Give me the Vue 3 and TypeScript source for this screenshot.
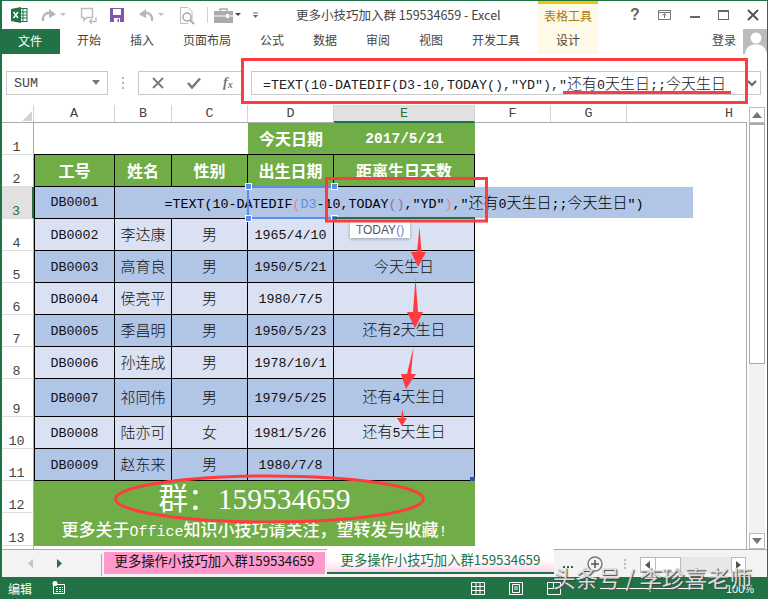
<script setup lang="ts">
interface Cell { text: string; cls?: string }
interface Row { num: number; cells: Cell[]; cls?: string }

const ribbonTabs = ['开始', '插入', '页面布局', '公式', '数据', '审阅', '视图', '开发工具']
const columns = [
  { name: 'A', cls: 'ca' }, { name: 'B', cls: 'cb' }, { name: 'C', cls: 'cc' }, { name: 'D', cls: 'cd' },
  { name: 'E', cls: 'ce on' }, { name: 'F', cls: 'cf' }, { name: 'G', cls: 'cg' }, { name: 'H', cls: 'ch' },
]

const person = (id: string, name: string, sex: string, date: string, note: string, tone: string): Row => ({
  num: 0,
  cls: tone,
  cells: [{ text: id }, { text: name }, { text: sex }, { text: date }, { text: note }],
})

const people: Row[] = [
  person('DB0002', '李达康', '男', '1965/4/10', '', 'light'),
  person('DB0003', '高育良', '男', '1950/5/21', '今天生日', 'dark'),
  person('DB0004', '侯亮平', '男', '1980/7/5', '', 'light'),
  person('DB0005', '季昌明', '男', '1950/5/23', '还有2天生日', 'dark'),
  person('DB0006', '孙连成', '男', '1978/10/1', '', 'light'),
  person('DB0007', '祁同伟', '男', '1979/5/25', '还有4天生日', 'dark tall'),
  person('DB0008', '陆亦可', '女', '1981/5/26', '还有5天生日', 'light'),
  person('DB0009', '赵东来', '男', '1980/7/8', '', 'dark'),
]
people.forEach((r, i) => { r.num = i + 4 })

const parts = (s: string) => (s.match(/[\u2e80-\uffdc]+|[^\u2e80-\uffdc]+/g) || []).map((t) => ({
  t,
  zh: /[\u2e80-\uffdc]/.test(t),
}))
const footerParts = parts('更多关于Office知识小技巧请关注，望转发与收藏!')
</script>

<template>
  <div class="app">
    <header class="titlebar">
      <svg class="qat" width="260" height="28" viewBox="0 0 260 28">
        <rect x="17.5" y="8.5" width="9.5" height="13" fill="#fff" stroke="#217346" />
        <path d="M20 12h7M20 15h7M20 18h7M23 9v12" stroke="#217346" fill="none" />
        <path d="M11 9 21 7V23L11 21Z" fill="#217346" />
        <path d="M13.5 12 18 18M18 12 13.5 18" stroke="#fff" stroke-width="1.5" />
        <path d="M43 21C42 14 48 11 54 14" fill="none" stroke="#b5b5b5" stroke-width="2.4" />
        <path d="M49 9 56 14.5 49 18Z" fill="#b5b5b5" />
        <path d="M60 13h6l-3 3Z" fill="#c0c0c0" />
        <path d="M81.500 8.500H92.500V17.500H87L84 20.500V17.500H81.500Z" fill="#fff" stroke="#bdbdbd" stroke-width="1.400" />
        <path d="M96 17V21.500H90M92 19 89.500 21.500 92 24" fill="none" stroke="#bdbdbd" stroke-width="1.400" />
        <rect x="110" y="8" width="14" height="14" fill="#8255a8" />
        <rect x="113" y="9" width="8" height="6" fill="#fff" />
        <rect x="114" y="18" width="6" height="4" fill="#fff" />
        <rect x="117.500" y="19" width="1.500" height="3" fill="#8255a8" />
        <path d="M152 21C153 14 147 11 141 14" fill="none" stroke="#b5b5b5" stroke-width="2.400" />
        <path d="M146 9 139 14.500 146 18Z" fill="#b5b5b5" />
        <path d="M158 13h6l-3 3Z" fill="#c0c0c0" />
        <path d="M180.500 7.500H188L192 11.500V20M180.500 7.500V23.500H188" fill="#fff" stroke="#bdbdbd" />
        <circle cx="187" cy="17" r="4" fill="#fff" stroke="#a8a8a8" stroke-width="1.400" />
        <path d="M190 20 194 24" stroke="#a8a8a8" stroke-width="2" />
        <path d="M207.500 7V23" stroke="#d0d0d0" />
        <path d="M220 11V9H227V11" fill="none" stroke="#a8a8a8" stroke-width="1.500" />
        <rect x="214" y="11" width="19" height="12" fill="#ababab" />
        <path d="M214 16H233" stroke="#fff" />
        <rect x="226" y="14" width="3" height="4" fill="#fff" />
        <path d="M235 13h6l-3 3Z" fill="#444" />
        <path d="M253 13H258" stroke="#666" />
        <path d="M253 15h5l-2.500 3Z" fill="#666" />
      </svg>
      <div class="title">更多小技巧加入群 159534659 - Excel</div>
      <div class="tooltab">表格工具</div>
      <svg class="winctl" width="170" height="28" viewBox="598 0 170 28">
        <text x="630" y="20" class="help">?</text>
        <rect x="658.500" y="10.500" width="12" height="9" fill="none" stroke="#777" />
        <path d="M658 12.500H671M664.500 18V14M662.500 15.500 664.500 13.500 666.500 15.500" fill="none" stroke="#777" />
        <rect x="690" y="16" width="10" height="2" fill="#666" />
        <rect x="718.500" y="10.500" width="10" height="9" fill="none" stroke="#666" />
        <rect x="718" y="10" width="11" height="2" fill="#666" />
        <path d="M748 10 758 20M758 10 748 20" stroke="#555" stroke-width="2" />
      </svg>
    </header>

    <nav class="ribbon">
      <div class="file">文件</div>
      <div class="tabs">
        <span v-for="t in ribbonTabs" :key="t">{{ t }}</span>
      </div>
      <div class="design">设计</div>
      <div class="login">登录</div>
      <svg class="avatar" width="25" height="25" viewBox="0 0 25 25">
        <rect width="25" height="25" fill="#bcbcbc" />
        <circle cx="13" cy="9" r="5.500" fill="#fff" />
        <path d="M2 25C3 17 8 15.500 13 15.500S23 17 24 25Z" fill="#fff" />
      </svg>
    </nav>

    <section class="fxbar">
      <div class="namebox">
        <span class="mono">SUM</span>
        <svg width="10" height="6" viewBox="0 0 10 6"><path d="M1 0h8L5 5Z" fill="#777" /></svg>
      </div>
      <svg class="grip" width="4" height="14" viewBox="0 0 4 14">
        <path d="M1 1h2v2H1zM1 6h2v2H1zM1 11h2v2H1z" fill="#b5b5b5" />
      </svg>
      <div class="cmds">
        <svg width="14" height="12" viewBox="0 0 14 12"><path d="M2 1 12 11M12 1 2 11" stroke="#777" stroke-width="1.800" /></svg>
        <svg width="14" height="12" viewBox="0 0 14 12"><path d="M1 6 5 10.500 13 1.500" fill="none" stroke="#777" stroke-width="2.400" /></svg>
        <span class="fx">f<sub>x</sub></span>
      </div>
      <div class="input">
        <span class="mono">=TEXT(10-DATEDIF(D3-10,TODAY(),"YD"),"</span><span class="zh">还有</span><span class="mono">0</span><span class="zh">天生日</span><span class="mono">;;</span><span class="zh">今天生日</span>
        <svg class="more" width="10" height="7" viewBox="0 0 10 7"><path d="M1 1 5 5 9 1" fill="none" stroke="#666" stroke-width="2" /></svg>
      </div>
    </section>

    <div class="colheads">
      <div class="corner"><svg width="12" height="12" viewBox="0 0 12 12"><path d="M11 1V11H1Z" fill="#d4d4d4" /></svg></div>
      <div v-for="c in columns" :key="c.name" class="colhead mono" :class="c.cls">{{ c.name }}</div>
    </div>

    <main class="body">
      <div class="sheet">
        <div class="row">
          <div class="rh mono">1</div>
          <div class="blank" />
          <div class="g bd zh16">今天日期</div>
          <div class="g bd dateh">2017/5/21</div>
        </div>
        <div class="row lined">
          <div class="rh mono">2</div>
          <div class="c g bd zh16">工号</div>
          <div class="c g bd zh16">姓名</div>
          <div class="c g bd zh16">性别</div>
          <div class="c g bd zh16">出生日期</div>
          <div class="c g bd zh16">距离生日天数</div>
        </div>
        <div class="row lined dark">
          <div class="rh mono act">3</div>
          <div class="c mono">DB0001</div>
          <div class="c merged" />
        </div>
        <div v-for="r in people" :key="r.num" class="row lined" :class="r.cls">
          <div class="rh mono">{{ r.num }}</div>
          <div v-for="(c, i) in r.cells" :key="i" class="c">
            <span class="line"><span v-for="(p, j) in parts(c.text)" :key="j" :class="p.zh ? 'zh' : 'mono'">{{ p.t }}</span></span>
          </div>
        </div>
        <div class="row foot">
          <div class="rh mono">12</div>
          <div class="big">群：<span>159534659</span></div>
        </div>
        <div class="row foot last">
          <div class="rh mono">13</div>
          <div class="small">
            <span v-for="(p, j) in footerParts" :key="j" :class="p.zh ? 'fz' : 'fl'">{{ p.t }}</span>
          </div>
        </div>
        <div class="rest"><div class="rh" /></div>

        <div class="editor">
          <span class="line"><span class="mono">=TEXT(10-DATEDIF<i class="red">(</i><i class="blue">D3</i>-10,TODAY<i class="pur">()</i>,"YD"<i class="red">)</i>,"</span><span class="zh">还有</span><span class="mono">0</span><span class="zh">天生日</span><span class="mono">;;</span><span class="zh">今天生日</span><span class="mono">")</span></span>
        </div>
        <div class="refbox"><b class="h tl" /><b class="h tr" /><b class="h bl" /><b class="h br" /></div>
        <div class="editframe" />
        <div class="tip"><i class="red2">T</i>ODAY<i class="pur">(</i><i class="blue">)</i></div>
        <b class="fill" />
      </div>
      <aside class="vscroll">
        <div class="vtrack">
          <div class="vbtn"><svg width="10" height="6" viewBox="0 0 10 6"><path d="M5 0 10 6H0Z" fill="#777" /></svg></div>
          <div class="vthumb" />
          <div class="vbtn"><svg width="10" height="6" viewBox="0 0 10 6"><path d="M0 0H10L5 6Z" fill="#777" /></svg></div>
        </div>
      </aside>
    </main>

    <footer class="tabbar">
      <svg width="104" height="28" viewBox="0 0 104 28">
        <path d="M33 9V18L28 13.500Z" fill="#c4c4c4" />
        <path d="M57 9V18L62 13.500Z" fill="#217346" />
        <path d="M101.500 4V26" stroke="#aaa" />
      </svg>
      <div class="sheettab pink">更多操作小技巧加入群159534659</div>
      <div class="sheettab active">更多操作小技巧加入群159534659</div>
      <svg class="hs" width="214" height="28" viewBox="554 548 214 28">
        <path d="M563 564h2v2h-2zM567 564h2v2h-2zM571 564h2v2h-2z" fill="#217346" />
        <circle cx="595" cy="562" r="7" fill="none" stroke="#777" stroke-width="1.400" />
        <path d="M595 558V566M591 562H599" stroke="#555" stroke-width="1.500" />
        <path d="M624 557h2v2h-2zM624 561h2v2h-2zM624 565h2v2h-2z" fill="#bbb" />
        <rect x="640.500" y="555.500" width="105" height="15" fill="#e8e8e8" stroke="#e8e8e8" />
        <rect x="640.500" y="555.500" width="15" height="15" fill="#fff" stroke="#bbb" />
        <path d="M650 559V567L645 563Z" fill="#555" />
        <rect x="655.500" y="555.500" width="25" height="15" fill="#fff" stroke="#bbb" />
        <rect x="731.500" y="555.500" width="14" height="15" fill="#fff" stroke="#bbb" />
        <path d="M736 559V567L741 563Z" fill="#555" />
      </svg>
    </footer>

    <div class="status">
      <span class="ready">编辑</span>
      <svg class="macro" width="14" height="14" viewBox="0 0 14 14">
        <path d="M1.500 3.500H12.500V12.500H1.500Z" fill="none" stroke="#fff" />
        <path d="M4 6h2v1H4zM7 6h2v1H7zM10 6h1v1h-1zM4 8h2v1H4zM7 8h2v1H7zM10 8h1v1h-1zM4 10h2v1H4zM7 10h2v1H7zM10 10h1v1h-1z" fill="#fff" />
        <circle cx="3" cy="2.500" r="2.500" fill="#fff" />
      </svg>
      <svg class="views" width="297" height="23" viewBox="471 576 297 23">
        <path d="M471.500 581.500H484.500V593.500H471.500ZM476 581.500V593.500M480 581.500V593.500M471.500 585.500H484.500M471.500 589.500H484.500" fill="none" stroke="#fff" />
        <path d="M509.500 581.500H522.500V593.500H509.500Z" fill="none" stroke="#fff" />
        <path d="M512.500 583.500H519.500V591.500H512.500ZM514 586H518M514 588H518" fill="none" stroke="#fff" />
        <path d="M547.500 581.500H560.500V593.500H547.500ZM547.500 587.500H553.500V581.500" fill="none" stroke="#fff" />
        <path d="M600 587.500H700M650 584V591" stroke="#fff" />
        <text x="726" y="592" class="zoomlbl">100%</text>
      </svg>
    </div>

    <svg class="marks" width="768" height="599" viewBox="0 0 768 599">
      <rect x="242.500" y="59.500" width="504" height="43" fill="none" stroke="#ff3b3f" stroke-width="3" />
      <path d="M563 92.500H731" stroke="#ff3b3f" stroke-width="3" />
      <rect x="326.500" y="178.500" width="160" height="42.500" fill="none" stroke="#ff3b3f" stroke-width="3" />
      <ellipse cx="269.500" cy="499" rx="154" ry="23" fill="none" stroke="#ff3b3f" stroke-width="3" />
      <path d="M419.500 227 421.500 252 426 252 418 267 411 252 417 252Z" fill="#ff3b3f" />
      <path d="M415.500 278 418 312 423 312 415 328 407 312 413 312Z" fill="#ff3b3f" />
      <path d="M413.500 347 411 374 416 374 406 389 401 374 407 374Z" fill="#ff3b3f" />
      <path d="M402.500 409 404 418 407 418 402 426 397 418 401 418Z" fill="#ff3b3f" />
    </svg>

    <div class="frame" />
    <div class="watermark">头条号 / 李珍喜老师</div>
  </div>
</template>

<style>
html, body { margin: 0; padding: 0; background: #fff; }
</style>

<style scoped>
.app {
  position: relative;
  width: 768px;
  height: 599px;
  overflow: hidden;
  background: #fff;
  color: #444;
  font-family: "Noto Sans CJK SC", "Liberation Sans", sans-serif;
  font-size: 12px;
}
.frame {
  position: absolute;
  inset: 0;
  border: 1px solid #217346;
  border-left-width: 2px;
  pointer-events: none;
}
.marks { position: absolute; left: 0; top: 0; pointer-events: none; }
.mono { font-family: "Liberation Mono", monospace; font-size: 13.33px; }
.zh { font-family: "Noto Sans CJK SC", sans-serif; font-size: 15px; font-weight: 300; }
.line { white-space: nowrap; line-height: 20px; }
i { font-style: normal; }

.titlebar { display: flex; height: 28px; }
.qat, .winctl { flex: none; display: block; }
.title { width: 242px; margin-left: 36px; padding-top: 6px; font-size: 12.500px; line-height: 18px; color: #444; white-space: nowrap; }
.tooltab {
  width: 60px;
  box-sizing: border-box;
  border-top: 4px solid #eec900;
  padding-top: 3px;
  background: #fff9e8;
  color: #a67c12;
  text-align: center;
  line-height: 18px;
}
.help { font: bold 16px "Liberation Sans", sans-serif; fill: #666; }

.ribbon { display: flex; height: 26px; align-items: stretch; }
.file { width: 60px; margin-top: 1px; background: #217346; color: #fff; text-align: center; line-height: 24px; }
.tabs { display: flex; gap: 29px; width: 478px; box-sizing: border-box; padding-left: 17px; line-height: 24px; color: #444; }
.tabs span { white-space: nowrap; }
.design { width: 60px; background: #fff9e8; text-align: center; line-height: 24px; color: #444; }
.login { width: 138px; text-align: right; line-height: 24px; }
.avatar { margin-left: 7px; margin-top: 1px; flex: none; }

.fxbar { display: flex; height: 24px; margin-top: 17px; padding-left: 6px; align-items: stretch; }
.namebox {
  width: 102px;
  box-sizing: border-box;
  border: 1px solid #c8c8c8;
  display: flex;
  align-items: center;
  justify-content: space-between;
  padding: 0 6px 0 7px;
}
.grip { align-self: center; margin-left: 13px; margin-right: 13px; }
.cmds {
  width: 103px;
  box-sizing: border-box;
  border: 1px solid #c8c8c8;
  border-right: none;
  display: flex;
  align-items: center;
  gap: 22px;
  padding-left: 12px;
}
.fx { font: italic 14px "Liberation Serif", serif; color: #777; font-weight: bold; }
.fx sub { font-size: 10px; vertical-align: -1px; }
.input {
  position: relative;
  width: 510px;
  margin-left: 10px;
  box-sizing: border-box;
  border: 1px solid #c8c8c8;
  padding-left: 11px;
  line-height: 22px;
  color: #222;
  white-space: nowrap;
}
.more { position: absolute; right: 3px; top: 8px; }

.colheads {
  display: flex;
  height: 18px;
  margin-top: 10px;
  box-sizing: border-box;
  border-bottom: 1px solid #ababab;
}
.corner { width: 34px; flex: none; box-sizing: border-box; padding: 3px 0 0 21px; border-right: 1px solid #d4d4d4; }
.colhead {
  box-sizing: border-box;
  border-right: 1px solid #d4d4d4;
  text-align: center;
  line-height: 18px;
  color: #444;
  flex: none;
}
.ca { width: 81px; } .cb { width: 57px; } .cc { width: 76px; } .cd { width: 86px; }
.ce { width: 141px; } .cf { width: 76px; } .cg { width: 76px; }
.ch { width: 120px; border-right: none; text-align: right; padding-right: 14px; }
.on { background: #e1e1e1; color: #217346; border-bottom: 2px solid #217346; height: 18px; }

.body { display: flex; height: 426px; }
.sheet {
  position: relative;
  width: 747px;
  flex: none;
  box-sizing: border-box;
  border-right: 1px solid #ababab;
  overflow: hidden;
}
.row {
  display: grid;
  grid-template-columns: 34px 81px 57px 76px 86px 141px;
  grid-template-rows: minmax(0, 1fr);
  height: 32px;
  color: #000;
}
.row.tall { height: 38px; }
.row.last { height: 33px; }
.rh {
  box-sizing: border-box;
  border-right: 1px solid #ababab;
  border-bottom: 1px solid #dcdcdc;
  background: #fff;
  color: #444;
  text-align: center;
  display: flex;
  align-items: flex-end;
  justify-content: center;
  line-height: 13px;
}
.rh.act { background: #e1e1e1; color: #217346; border-right: 2px solid #217346; }
.blank { grid-column: span 3; border-bottom: 1px solid #000; }
.g { background: #70ad47; color: #fff; display: flex; align-items: center; justify-content: center; border-bottom: 1px solid #000; }
.bd { font-weight: bold; }
.zh16 { font-size: 16px; font-family: "Noto Sans CJK SC", sans-serif; line-height: 20px; padding-bottom: 1px; box-sizing: border-box; }
.dateh { font: bold 14.500px "Liberation Mono", monospace; }
.c {
  box-sizing: border-box;
  border-right: 1px solid #000;
  border-bottom: 1px solid #000;
  display: flex;
  align-items: center;
  justify-content: center;
  white-space: nowrap;
}
.rh + .c { border-left: 1px solid #000; }
.merged { grid-column: span 4; }
.row.dark .c { background: #b1c5e7; }
.row.light .c { background: #d9e1f2; }
.row.lined.dark > .c:not(.g), .row.lined.light > .c:not(.g) { color: #111; }
.foot .big, .foot .small { grid-column: span 5; background: #70ad47; color: #fff; text-align: center; white-space: nowrap; }
.big { font-size: 29.500px; line-height: 30px; font-family: "Noto Sans CJK SC", sans-serif; }
.big span { font-family: "Liberation Serif", serif; }
.small { font-weight: 500; line-height: 32px; }
.fz { font-size: 17px; font-family: "Noto Sans CJK SC", sans-serif; }
.fl { font-size: 15px; font-family: "Liberation Mono", monospace; }
.rest { height: 3px; }
.rest .rh { width: 34px; height: 3px; border: none; border-right: 1px solid #ababab; }

.editor {
  position: absolute;
  left: 115px;
  top: 64px;
  width: 578px;
  height: 31px;
  padding-top: 1px;
  box-sizing: border-box;
  background: #b1c5e7;
  color: #000;
  display: flex;
  align-items: center;
  justify-content: center;
  white-space: nowrap;
}
.red { color: #ef7f7f; }
.blue { color: #5b8ee8; }
.pur { color: #8f6cc0; }
.red2 { color: #8a5a80; }
.refbox {
  position: absolute;
  left: 247px;
  top: 63px;
  width: 87px;
  height: 33px;
  box-sizing: border-box;
  border-top: 2px solid #5b8ee8;
  border-bottom: 2px solid #5b8ee8;
  border-left: 2px solid #5b8ee8;
  pointer-events: none;
}
.h { position: absolute; width: 5px; height: 5px; background: #5b8ee8; border: 1px solid #fff; }
.tl { left: -4px; top: -5px; } .tr { right: -4px; top: -5px; }
.bl { left: -4px; bottom: -5px; } .br { right: -4px; bottom: -5px; }
.editframe {
  position: absolute;
  left: 333px;
  top: 63px;
  width: 142px;
  height: 33px;
  box-sizing: border-box;
  border-bottom: 2px solid #217346;
  pointer-events: none;
}
.tip {
  position: absolute;
  left: 350px;
  top: 99px;
  width: 60px;
  height: 16px;
  background: #fff;
  box-shadow: 0 1px 3px rgba(0, 0, 0, 0.3);
  color: #556;
  font: 12px "Liberation Sans", sans-serif;
  line-height: 16px;
  text-align: center;
}
.fill { position: absolute; left: 470px; top: 354px; width: 5px; height: 4px; background: #2f55a8; }

.vscroll {
  width: 21px;
  flex: none;
  box-sizing: border-box;
  padding: 0 3px 0 2px;
  margin-top: -16px;
  height: 442px;
  background: #fff;
  position: relative;
}
.vtrack { height: 100%; background: #f1f1f1; display: flex; flex-direction: column; }
.vbtn {
  height: 16px;
  flex: none;
  background: #fff;
  border: 1px solid #bbb;
  box-sizing: border-box;
  display: flex;
  align-items: center;
  justify-content: center;
}
.vthumb { height: 241px; margin-bottom: auto; background: #fff; border: 1px solid #aaa; border-top-width: 2px; box-sizing: border-box; }

.tabbar { display: flex; height: 28px; background: #f3f3f3; border-top: 1px solid #ababab; box-sizing: border-box; }
.tabbar > svg { flex: none; display: block; }
.sheettab { font-size: 13.330px; white-space: nowrap; text-align: center; box-sizing: border-box; }
.pink { width: 221px; height: 22px; margin-top: 2px; background: #ff99cc; color: #111; line-height: 18px; }
.active {
  width: 227px;
  height: 25px;
  margin-left: 2px;
  margin-top: -1px;
  background: linear-gradient(#fff 45%, #ffd6ec);
  border-bottom: 2px solid #217346;
  color: #217346;
  line-height: 22px;
}
.status { position: relative; display: flex; height: 23px; background: #217346; color: #fff; align-items: center; padding-left: 8px; }
.ready { width: 44px; }
.macro { flex: none; margin-top: -2px; }
.views { position: absolute; left: 471px; top: 0; }
.zoomlbl { font: 11px "Liberation Sans", sans-serif; fill: #fff; }
.watermark {
  position: absolute;
  left: 553px;
  top: 561px;
  font-size: 22.500px;
  line-height: 32px;
  color: #dcdcdc;
  text-shadow: 1px 1px 1px #444;
  white-space: nowrap;
  pointer-events: none;
}
</style>
